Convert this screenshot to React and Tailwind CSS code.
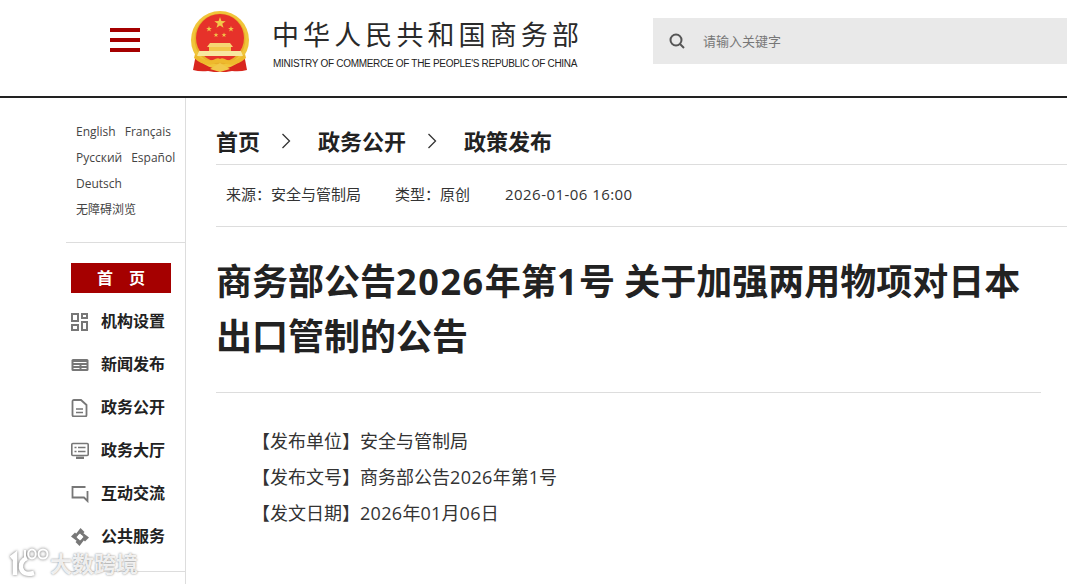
import React from "react";

const sans = "font-['Open_Sans','Noto_Sans_CJK_SC',sans-serif]";

const Star = ({ x, y, r }) => {
  const pts = [];
  for (let i = 0; i < 10; i++) {
    const rad = i % 2 === 0 ? r : r * 0.4;
    const a = (Math.PI / 5) * i - Math.PI / 2;
    pts.push(`${x + rad * Math.cos(a)},${y + rad * Math.sin(a)}`);
  }
  return <polygon points={pts.join(" ")} fill="#f2c84a" />;
};

const Emblem = () => (
  <svg width="60" height="64" viewBox="0 0 60 64">
    <path d="M6 44 L3 60 Q10 62 18 61 L24 62 H36 L42 61 Q50 62 57 60 L54 44 Z" fill="#d8261e" />
    <circle cx="30" cy="30" r="29" fill="#f0c53a" />
    <circle cx="30" cy="29" r="25.500" fill="#e8ae2a" />
    <circle cx="30" cy="28" r="24" fill="#e6322a" />
    <Star x={30} y={13} r={6} />
    <Star x={19} y={19} r={3} />
    <Star x={26} y={25} r={2.600} />
    <Star x={34} y={25} r={2.600} />
    <Star x={41} y={19} r={3} />
    <path d="M20 33 H40 L43 37 H17 Z" fill="#f6d774" />
    <rect x="19" y="37" width="22" height="4" fill="#f2c84a" />
    <path d="M9 41 H51 L53 46 H7 Z" fill="#f8e7a0" />
    <path d="M5 44 Q14 52 23 50 Q28 47 30 49 Q32 47 37 50 Q46 52 55 44 L56 48 Q46 57 37 54 Q32 52 30 53 Q28 52 23 54 Q14 57 4 48 Z" fill="#eeb92c" />
    <path d="M20 59 L30 53 L40 59 L30 62 Z" fill="#f2c84a" />
  </svg>
);

const NavIcon = ({ type }) => {
  const common = { width: 18, height: 18, viewBox: "0 0 18 18", fill: "none", stroke: "#777", strokeWidth: 2 };
  if (type === "grid")
    return (
      <svg {...common}>
        <rect x="1" y="1" width="6" height="7" />
        <rect x="11" y="1" width="5" height="4" />
        <rect x="1" y="12" width="6" height="5" />
        <rect x="11" y="9" width="5" height="8" />
      </svg>
    );
  if (type === "news")
    return (
      <svg {...common}>
        <rect x="0.500" y="3" width="17" height="12" rx="1.500" fill="#777" stroke="none" />
        <path d="M2.500 6.500H15.500M2.500 9.500H8.500M10.500 9.500H15.500M2.500 12.500H8.500M10.500 12.500H15.500" stroke="#fff" strokeWidth="1" />
      </svg>
    );
  if (type === "doc")
    return (
      <svg {...common} strokeWidth="1.800">
        <path d="M1.500 2.500 Q1.500 1 3 1 H10 L15.500 6 V16 Q15.500 17.500 14 17.500 H3 Q1.500 17.500 1.500 16 Z" />
        <path d="M5 10H12M5 13.500H12" strokeWidth="1.400" />
      </svg>
    );
  if (type === "screen")
    return (
      <svg {...common} strokeWidth="1.600">
        <rect x="0.800" y="1.500" width="16.400" height="12" rx="1" />
        <path d="M5 15.800H13" strokeWidth="2.400" />
        <path d="M3.500 5.500H5.500M7 5.500H14.500M3.500 9.500H5.500M7 9.500H14.500" strokeWidth="1.300" />
      </svg>
    );
  if (type === "chat")
    return (
      <svg {...common} strokeWidth="1.800">
        <path d="M14.500 2 H1.500 V12.500 H13 L16.500 16 V6" />
      </svg>
    );
  return (
    <svg {...common} stroke="none" fill="#777">
      {[0, 90, 180, 270].map((deg) => (
        <path key={deg} d="M9.500 0 L13.500 4 L10.500 7 L9 5.500 L5.800 8.200 L4.500 6.500 Z" transform={`rotate(${deg} 9 9)`} />
      ))}
    </svg>
  );
};

const navItems = [
  { icon: "grid", label: "机构设置" },
  { icon: "news", label: "新闻发布" },
  { icon: "doc", label: "政务公开" },
  { icon: "screen", label: "政务大厅" },
  { icon: "chat", label: "互动交流" },
  { icon: "service", label: "公共服务" },
];

const Chevron = () => (
  <svg width="10" height="16" viewBox="0 0 10 16" fill="none" stroke="#333" strokeWidth="1.300">
    <path d="M1.500 1 L8.500 8 L1.500 15" />
  </svg>
);

export default function App() {
  return (
    <div className={`relative h-[584px] w-[1067px] overflow-hidden bg-white text-[#222] ${sans}`}>
      <header className="flex h-[98px] border-b-2 border-[#222]">
        <div className="mt-[28px] ml-[110px] flex h-[24px] w-[30px] flex-col justify-between">
          <span className="h-[4px] bg-[#a50000]" />
          <span className="h-[4px] bg-[#a50000]" />
          <span className="h-[4px] bg-[#a50000]" />
        </div>
        <div className="mt-[10px] ml-[50px]">
          <Emblem />
        </div>
        <div className="mt-[17px] ml-[22px] w-[341px]">
          <div className="text-[27px] leading-[36px] tracking-[4.100px] whitespace-nowrap text-[#2a2a2a]">中华人民共和国商务部</div>
          <div className="mt-[2px] ml-[1px] font-['Liberation_Sans',sans-serif] text-[10px] leading-[18px] tracking-[-0.300px] whitespace-nowrap text-[#222]">
            MINISTRY OF COMMERCE OF THE PEOPLE'S REPUBLIC OF CHINA
          </div>
        </div>
        <div className="mt-[18px] ml-[40px] flex h-[46px] flex-1 items-center bg-[#e9e9e9] pl-[16px]">
          <svg width="16" height="16" viewBox="0 0 16 16" fill="none" stroke="#555" strokeWidth="2">
            <circle cx="7" cy="7" r="5.500" />
            <path d="M11 11 L15 15" />
          </svg>
          <span className="mt-[1px] ml-[18px] text-[13px] text-[#777]">请输入关键字</span>
        </div>
      </header>
      <div className="flex">
        <aside className="ml-[66px] h-[486px] w-[120px] border-r border-[#ddd]">
          <div className="h-[145px] border-b border-[#ddd] pt-[21px] pl-[10px] text-[12px] leading-[26px] text-[#444]">
            <div className="flex gap-[9px]">
              <span>English</span>
              <span>Français</span>
            </div>
            <div className="flex gap-[9px]">
              <span>Русский</span>
              <span>Español</span>
            </div>
            <div>Deutsch</div>
            <div>无障碍浏览</div>
          </div>
          <div className="mt-[20px] ml-[5px] flex h-[30px] w-[100px] items-center justify-center bg-[#a50000] text-[16px] font-bold text-white">
            首<span className="ml-[16px]">页</span>
          </div>
          <nav className="mt-[7px] flex flex-col border-b border-[#ddd] pb-[13px] pl-[5px]">
            {navItems.map((item) => (
              <div key={item.label} className="flex h-[43px] items-center">
                <NavIcon type={item.icon} />
                <span className="ml-[12px] pb-[2px] text-[16px] font-bold text-[#222]">{item.label}</span>
              </div>
            ))}
          </nav>
        </aside>
        <main className="ml-[30px] flex-1">
          <div className="flex h-[67px] items-center border-b border-[#ddd] pt-[20px] text-[22px] font-bold text-[#222]">
            <span>首页</span>
            <span className="ml-[21px]"><Chevron /></span>
            <span className="ml-[27px]">政务公开</span>
            <span className="ml-[21px]"><Chevron /></span>
            <span className="ml-[27px]">政策发布</span>
          </div>
          <div className="flex h-[62px] items-center border-b border-[#ddd] pb-[3px] pl-[10px] text-[15px] text-[#333]">
            <span>来源：安全与管制局</span>
            <span className="ml-[34px]">类型：原创</span>
            <span className="ml-[35px] tracking-[0.450px]">2026-01-06 16:00</span>
          </div>
          <div className="mr-[26px] border-b border-[#ddd] pt-[27px] pb-[28px]">
            <h1 className="text-[36px] leading-[55px] font-bold text-[#222]">
              商务部公告<span className="tracking-[1.600px]">2026</span>年第<span className="tracking-[1.600px]">1</span>号 关于加强两用物项对日本出口管制的公告
            </h1>
          </div>
          <div className="pt-[30px] pl-[36px] text-[18px] leading-[36px] text-[#333]">
            <div>【发布单位】安全与管制局</div>
            <div>【发布文号】商务部公告<span className="tracking-[0.400px]">2026</span>年第1号</div>
            <div>【发文日期】<span className="tracking-[0.300px]">2026</span>年<span className="tracking-[0.300px]">01</span>月<span className="tracking-[0.300px]">06</span>日</div>
          </div>
        </main>
      </div>
      <div className="absolute bottom-[6px] left-[10px] flex items-center text-[22px] leading-[26px] font-bold text-white/85 [text-shadow:0_0_2px_rgba(110,110,110,0.9)]">
        <svg width="40" height="30" viewBox="0 0 40 30" fill="none" stroke="#fff" className="drop-shadow-[0_0_1.500px_rgba(90,90,90,0.9)]">
          <path d="M1 10 L5 7 V27" strokeWidth="4.500" />
          <path d="M17 10 Q10 13 11 20 Q13 28 24 25" strokeWidth="4.500" />
          <path d="M15 2 V11" strokeWidth="2" />
          <ellipse cx="22" cy="6" rx="3.800" ry="4.500" strokeWidth="2" />
          <ellipse cx="33" cy="6" rx="4.500" ry="4.500" strokeWidth="2" />
        </svg>
        <span>大数跨境</span>
      </div>
    </div>
  );
}
